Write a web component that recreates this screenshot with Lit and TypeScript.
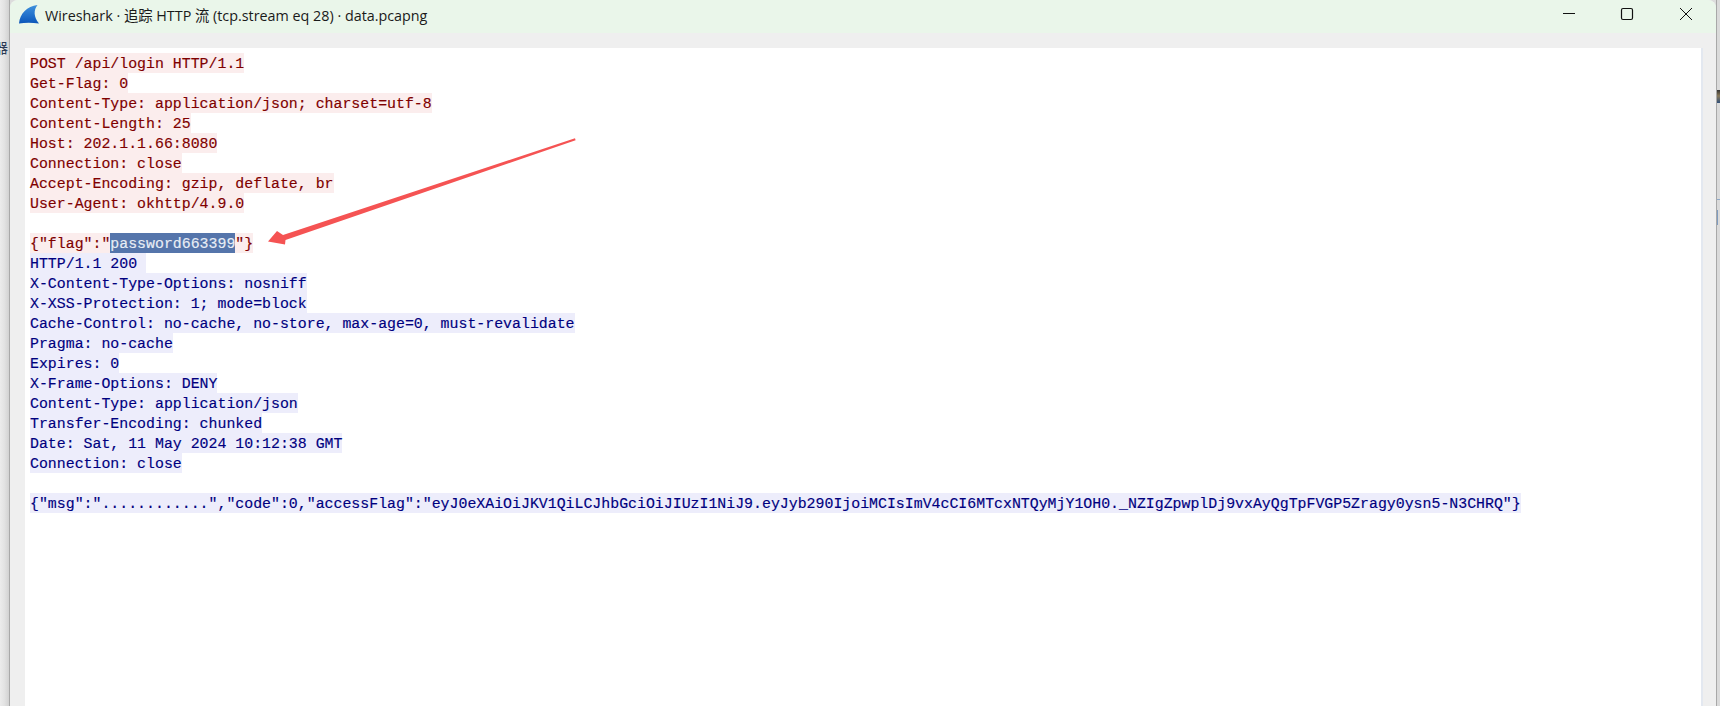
import { LitElement, html, css } from "lit";
import { customElement } from "lit/decorators.js";

const client = [
  "POST /api/login HTTP/1.1",
  "Get-Flag: 0",
  "Content-Type: application/json; charset=utf-8",
  "Content-Length: 25",
  "Host: 202.1.1.66:8080",
  "Connection: close",
  "Accept-Encoding: gzip, deflate, br",
  "User-Agent: okhttp/4.9.0",
  "",
];
const server = [
  "HTTP/1.1 200 ",
  "X-Content-Type-Options: nosniff",
  "X-XSS-Protection: 1; mode=block",
  "Cache-Control: no-cache, no-store, max-age=0, must-revalidate",
  "Pragma: no-cache",
  "Expires: 0",
  "X-Frame-Options: DENY",
  "Content-Type: application/json",
  "Transfer-Encoding: chunked",
  "Date: Sat, 11 May 2024 10:12:38 GMT",
  "Connection: close",
  "",
  '{"msg":"............","code":0,"accessFlag":"eyJ0eXAiOiJKV1QiLCJhbGciOiJIUzI1NiJ9.eyJyb290IjoiMCIsImV4cCI6MTcxNTQyMjY1OH0._NZIgZpwplDj9vxAyQgTpFVGP5Zragy0ysn5-N3CHRQ"}',
];

@customElement("app-root")
export class AppRoot extends LitElement {
  static styles = css`
    :host {
      display: flex;
      width: 1720px;
      height: 706px;
      overflow: hidden;
      background: #dcdcdc;
      position: relative;
    }
    .left {
      width: 10px;
      flex: none;
      box-sizing: border-box;
      border-right: 1px solid #a9a9a9;
      background: linear-gradient(90deg, #ececec 0, #e2e2e2 50%, #d2d2d2 100%);
      position: relative;
      overflow: hidden;
    }
    .left span {
      position: absolute;
      left: -6px;
      top: 37px;
      font: 14px "Noto Sans CJK SC", sans-serif;
      color: #2b3a55;
    }
    .right {
      width: 4px;
      flex: none;
      background: #dadada;
      border-left: 1px solid #a8a8a8;
      box-sizing: border-box;
      position: relative;
    }
    .right i {
      position: absolute;
      left: 0;
      width: 3px;
      display: block;
    }
    .right .m1 {
      top: 90px;
      height: 13px;
      background: linear-gradient(180deg, #333 0, #8a7a5a 45%, #2f4f7a 100%);
    }
    .right .m2 {
      top: 199px;
      height: 1px;
      background: #8fa9c8;
    }
    .right .m3 {
      top: 210px;
      height: 15px;
      width: 1px;
      left: 0;
      background: #7f9cc0;
    }
    .win {
      flex: 1;
      display: flex;
      flex-direction: column;
      background: #efefef;
      border-radius: 8px 8px 0 0;
      overflow: hidden;
      min-width: 0;
    }
    .title {
      height: 33px;
      flex: none;
      box-sizing: border-box;
      background: #eaf6ea;
      display: flex;
      align-items: center;
      padding: 0 1px 5px 9px;
    }
    .title svg.logo {
      width: 20px;
      height: 20px;
      flex: none;
    }
    .title .text {
      margin-left: 6px;
      font: 14.33px "Open Sans", "Noto Sans CJK SC", sans-serif;
      color: #1a1a1a;
      white-space: pre;
    }
    .ctrls {
      margin-left: auto;
      display: flex;
    }
    .ctrl {
      width: 58.5px;
      height: 28px;
      display: flex;
      align-items: center;
      justify-content: center;
    }
    .ctrl svg {
      width: 14px;
      height: 14px;
    }
    .body {
      flex: 1;
      padding: 15px 13px 0 15px;
      display: flex;
      min-height: 0;
    }
    .panel {
      flex: 1;
      background: #fff;
      border-right: 2px solid #e3e8f0;
      padding: 5px;
      font: 14.88px/20px "Liberation Mono", monospace;
      -webkit-text-stroke: 0.15px currentColor;
    }
    .ln {
      height: 20px;
      white-space: pre;
    }
    .ln span {
      display: inline-block;
      box-sizing: border-box;
      height: 20px;
      padding-top: 1px;
      vertical-align: top;
    }
    .c {
      background: #fbeded;
      color: #7f0000;
    }
    .s {
      background: #ededfb;
      color: #00007f;
    }
    .sel {
      background: #5575ab;
      color: #e8edf5;
    }
    .arrow {
      position: absolute;
      left: 0;
      top: 0;
      width: 1720px;
      height: 706px;
      pointer-events: none;
    }
  `;

  render() {
    return html`
      <div class="left"><span>器</span></div>
      <div class="win">
        <div class="title">
          <svg class="logo" viewBox="0 0 20 20">
            <defs>
              <linearGradient id="fin" x1="0" y1="0" x2="0" y2="1">
                <stop offset="0" stop-color="#3f90dc"></stop>
                <stop offset="0.6" stop-color="#1f6fca"></stop>
                <stop offset="1" stop-color="#0c55b8"></stop>
              </linearGradient>
            </defs>
            <path d="M0 19.5C1 9 8 2.5 18.5 1C14.5 6 14.5 13 20 19.5C13 18.4 6 18.4 0 19.5Z" fill="url(#fin)"></path>
          </svg>
          <span class="text">Wireshark · 追踪 HTTP 流 (tcp.stream eq 28) · data.pcapng</span>
          <div class="ctrls">
            <div class="ctrl">
              <svg viewBox="0 0 14 14"><path d="M1 6.5H13" stroke="#111" stroke-width="1" fill="none"></path></svg>
            </div>
            <div class="ctrl">
              <svg viewBox="0 0 14 14"><rect x="1.5" y="1.5" width="11" height="11" rx="1.5" stroke="#111" stroke-width="1.2" fill="none"></rect></svg>
            </div>
            <div class="ctrl">
              <svg viewBox="0 0 14 14"><path d="M1 1L13 13M13 1L1 13" stroke="#111" stroke-width="1" fill="none"></path></svg>
            </div>
          </div>
        </div>
        <div class="body">
          <div class="panel">
            ${client.map((l) => html`<div class="ln">${l ? html`<span class="c">${l}</span>` : ""}</div>`)}
            <div class="ln"><span class="c">{"flag":"</span><span class="sel">password663399</span><span class="c">"}</span></div>
            ${server.map((l) => html`<div class="ln">${l ? html`<span class="s">${l}</span>` : ""}</div>`)}
          </div>
        </div>
      </div>
      <div class="right"><i class="m1"></i><i class="m2"></i><i class="m3"></i></div>
      <svg class="arrow" viewBox="0 0 1720 706">
        <path d="M575 138.2L283 235L277 231L268 241.5L285 244.5L285.5 240L575.6 140.2Z" fill="#f55353"></path>
      </svg>
    `;
  }
}
